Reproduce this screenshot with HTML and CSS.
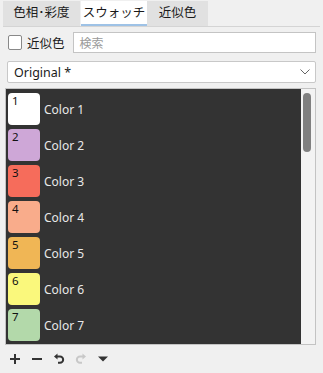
FILE: index.html
```html
<!DOCTYPE html>
<html lang="ja">
<head>
<meta charset="utf-8">
<link rel="stylesheet" href="styles.css">
</head>
<body>
<div class="panel">
  <div class="tabs">
    <div class="tab">色相･彩度</div>
    <div class="tab active">スウォッチ</div>
    <div class="tab">近似色</div>
  </div>
  <div class="filter-row">
    <label class="check"><span class="box"></span><span class="lbl">近似色</span></label>
    <div class="search">検索</div>
  </div>
  <div class="select">
    <span>Original *</span>
    <svg class="chev" width="10" height="6" viewBox="0 0 10 6"><path d="M0.5 0.5 L5 5 L9.5 0.5" fill="none" stroke="#666" stroke-width="1"/></svg>
  </div>
  <div class="list">
    <div class="items">
      <div class="item"><div class="sw" style="background:#ffffff">1</div><span>Color 1</span></div>
      <div class="item"><div class="sw" style="background:#cea7d7">2</div><span>Color 2</span></div>
      <div class="item"><div class="sw" style="background:#f66c5b">3</div><span>Color 3</span></div>
      <div class="item"><div class="sw" style="background:#f9ac8b">4</div><span>Color 4</span></div>
      <div class="item"><div class="sw" style="background:#f0b655">5</div><span>Color 5</span></div>
      <div class="item"><div class="sw" style="background:#faf87c">6</div><span>Color 6</span></div>
      <div class="item"><div class="sw" style="background:#b3d9aa">7</div><span>Color 7</span></div>
    </div>
    <div class="scroll"><div class="thumb"></div></div>
  </div>
  <div class="toolbar">
    <svg width="12" height="12" viewBox="0 0 12 12"><path d="M6 1 V11 M1 6 H11" stroke="#333" stroke-width="2"/></svg>
    <svg width="12" height="12" viewBox="0 0 12 12"><path d="M1 6 H11" stroke="#333" stroke-width="2"/></svg>
    <svg width="12" height="12" viewBox="0 0 12 12"><path d="M3.5 3.5 H7 A3 3 0 0 1 7 9.8 H5" fill="none" stroke="#333" stroke-width="2"/><path d="M1 3.5 L4.5 0.5 V6.5 Z" fill="#333"/></svg>
    <svg width="12" height="12" viewBox="0 0 12 12"><path d="M8.5 3.5 H5 A3 3 0 0 0 5 9.8 H7" fill="none" stroke="#c8c8c8" stroke-width="2"/><path d="M11 3.5 L7.5 0.5 V6.5 Z" fill="#c8c8c8"/></svg>
    <svg width="12" height="12" viewBox="0 0 12 12"><path d="M1 3.5 H11 L6 8.5 Z" fill="#333"/></svg>
  </div>
</div>
</body>
</html>
```
FILE: styles.css
```css
html, body {
  margin: 0;
  padding: 0;
  background: #f0f0f0;
}
body {
  font-family: "Noto Sans", "Noto Sans CJK JP", sans-serif;
  font-size: 12px;
  color: #1a1a1a;
  width: 323px;
  height: 373px;
  overflow: hidden;
}
.panel {
  padding: 1px 3px 0 3px;
}
.tabs {
  display: flex;
  height: 25px;
  border-bottom: 1px solid #d4d4d4;
}
.tab {
  background: #e1e1e1;
  display: flex;
  align-items: center;
  justify-content: center;
  font-size: 12.5px;
  line-height: 1;
  white-space: nowrap;
}
.tab:nth-child(1) { width: 77px; border-right: 1px solid #f0f0f0; }
.tab:nth-child(2) { width: 66px; }
.tab:nth-child(3) { width: 61px; }
.tab.active {
  background: #ffffff;
  box-shadow: inset 0 -2px 0 #9ec2e6;
}
.filter-row {
  display: flex;
  align-items: center;
  margin: 5px 4px 0 5px;
  height: 21px;
  gap: 11px;
}
.check {
  display: flex;
  align-items: center;
  gap: 5px;
  font-size: 12.5px;
  flex: 0 0 55px;
  white-space: nowrap;
}
.box {
  flex: 0 0 14px;
  height: 15px;
  border: 1px solid #888;
  border-radius: 2px;
  background: #fff;
  box-sizing: border-box;
}
.search {
  flex: 1;
  height: 21px;
  box-sizing: border-box;
  border: 1px solid #c4c4c4;
  background: #fff;
  color: #9a9a9a;
  padding-left: 6px;
  display: flex;
  align-items: center;
  font-size: 12px;
  margin-left: -3px;
}
.select {
  margin: 8px 4px 0 4px;
  height: 22px;
  box-sizing: border-box;
  border: 1px solid #c8c8c8;
  border-radius: 2px;
  background: #fff;
  display: flex;
  align-items: center;
  justify-content: space-between;
  padding: 0 5px 0 6px;
  font-size: 12.5px;
}
.list {
  margin: 5px 4px 0 2px;
  height: 257px;
  box-sizing: border-box;
  border: 1px solid #c3c3c3;
  display: flex;
  overflow: hidden;
}
.items {
  flex: 1;
  background: #333333;
  padding: 4px 0 0 2px;
  display: flex;
  flex-direction: column;
  gap: 4px;
  overflow: hidden;
}
.item {
  display: flex;
  align-items: center;
  gap: 4px;
  color: #e8e8e8;
  font-size: 12px;
  flex-shrink: 0;
}
.sw {
  width: 32px;
  height: 32px;
  border-radius: 4px;
  color: #111;
  font-size: 11.5px;
  line-height: 1;
  padding: 2px 0 0 4px;
  box-sizing: border-box;
}
.scroll {
  width: 11px;
  background: #f3f3f3;
  padding: 4px 1px 0 2px;
}
.thumb {
  width: 8px;
  height: 59px;
  border-radius: 4px;
  background: #808080;
}
.toolbar {
  display: flex;
  align-items: center;
  gap: 10px;
  padding: 8px 0 0 6px;
}
```
